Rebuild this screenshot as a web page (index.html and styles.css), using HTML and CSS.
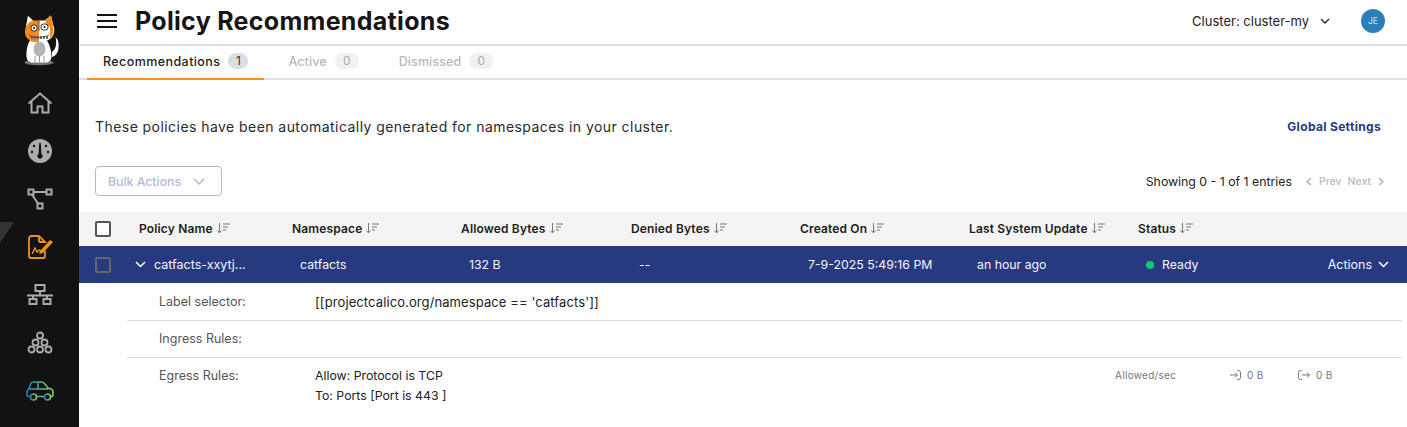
FILE: index.html
```html
<!DOCTYPE html>
<html lang="en">
<head>
    <meta charset="UTF-8">
    <meta name="viewport" content="width=device-width, initial-scale=1.0">
    <title>Policy Recommendations</title>
    <link rel="stylesheet" href="styles.css">
</head>
<body>
<div class="app">
    <nav class="sidebar">
        <svg class="logo" width="40" height="56" viewBox="0 0 40 56">
            <ellipse cx="19" cy="48.500" rx="14.500" ry="2.800" fill="#77777a"/>
            <path d="M32 38c4-3 5-8 3.500-15 3 3 3.500 6 3 11-.5 5-3 8-6.500 9z" fill="#fff"/>
            <path d="M10 26c-3 5-4 12-3.500 17 .3 3 2 5 5 5.500h15c3-.5 5-3 5-6 0-6-2-12-4.500-16z" fill="#fff"/>
            <ellipse cx="19.500" cy="35" rx="6" ry="7.500" fill="#b3b3b8"/>
            <path d="M15 42v6M19.500 42v6M24 42v6" stroke="#555" stroke-width=".6"/>
            <path d="M8 2l5 4.500h6V28c-5 1-9-.5-12-4-2.500-3-2.500-8-1-11.500z" fill="#f28a17"/>
            <path d="M19 6.500h5.500L31 1.500l2 9c2 4 1.500 8.500-.5 12-3 4-8 5.500-13.500 5.500z" fill="#fff"/>
            <path d="M25 6.500l6-5 2 9-2 3-4-2.500-1-2z" fill="#f28a17"/>
            <path d="M32 11c2 4 1.500 8.500-.5 12l-1.500 1V13z" fill="#f28a17"/>
            <path d="M8 2l5 4.500-4 2-3 4z" fill="#fff"/>
            <rect x="11" y="11" width="6" height="6" rx="2.500" fill="#fff" stroke="#222" stroke-width="1"/>
            <rect x="21" y="10" width="7" height="6" rx="2.500" fill="#fff" stroke="#222" stroke-width="1"/>
            <circle cx="14" cy="14" r="1.100" fill="#222"/>
            <circle cx="24.500" cy="13" r="1.100" fill="#222"/>
            <path d="M19 7v10M9 21c4 3 15 3 20 0" fill="none" stroke="#333" stroke-width=".8"/>
            <path d="M11 23.500h17" stroke="#555" stroke-width="2.500" stroke-dasharray="2 1"/>
        </svg>
        <a class="nav-item">
            <svg width="26" height="22" viewBox="0 0 26 22" fill="none" stroke="#aaaaaf" stroke-width="2"><path d="M1.500 11.500 13 1.500l11.500 10M4.500 9.500V20.500h6v-6h5v6h6V9.500"/></svg>
        </a>
        <a class="nav-item">
            <svg width="26" height="26" viewBox="0 0 26 26"><circle cx="13" cy="13" r="12" fill="#aaaaaf"/><path d="M12.200 5h1.600l.6 11a2.500 2.500 0 1 1-2.800 0z" fill="#111"/><g fill="#111"><circle cx="7" cy="8" r="1.200"/><circle cx="19" cy="8" r="1.200"/><circle cx="5" cy="14" r="1.200"/><circle cx="21" cy="14" r="1.200"/></g></svg>
        </a>
        <a class="nav-item">
            <svg width="26" height="22" viewBox="0 0 26 22" fill="none" stroke="#aaaaaf" stroke-width="2"><rect x="1.500" y="1.500" width="5" height="5"/><rect x="19.500" y="1.500" width="5" height="5"/><rect x="10.500" y="15.500" width="5" height="5"/><path d="M6.500 4h13M5 6.500l6 9"/></svg>
        </a>
        <a class="nav-item">
            <svg width="26" height="24" viewBox="0 0 26 24" fill="none" stroke="#f0901e" stroke-width="1.800"><path d="M12 1H4a2.500 2.500 0 0 0-2 2v18a2 2 0 0 0 2 2h12a2 2 0 0 0 2-2v-5M12 1v5a1 1 0 0 0 1 1h5L12 1z"/><path d="M5 19l3-6 2 4 2-2 2 1" stroke-width="1.400"/><path d="M13 16l10-11 3 2-10 11-4 1z" fill="#f0901e" stroke="none"/></svg>
        </a>
        <a class="nav-item">
            <svg width="26" height="22" viewBox="0 0 26 22" fill="none" stroke="#aaaaaf" stroke-width="2"><rect x="8.500" y="1" width="9" height="6"/><rect x="2.500" y="15" width="7" height="5"/><rect x="16.500" y="15" width="7" height="5"/><path d="M13 7v4M0 11.500h26M6 11.500V15M20 11.500V15"/></svg>
        </a>
        <a class="nav-item">
            <svg width="26" height="24" viewBox="0 0 26 24" fill="none" stroke="#aaaaaf" stroke-width="1.800"><circle cx="13" cy="4.500" r="3"/><circle cx="8.500" cy="11.500" r="3"/><circle cx="17.500" cy="11.500" r="3"/><circle cx="4.500" cy="18.500" r="3"/><circle cx="13" cy="18.500" r="3"/><circle cx="21.500" cy="18.500" r="3"/></svg>
        </a>
        <a class="nav-item">
            <svg width="28" height="20" viewBox="0 0 28 20" fill="none" stroke-width="1.500" stroke="url(#carfill)">
                <defs><linearGradient id="carfill" x1="0" y1="0" x2="1" y2="0"><stop offset="0" stop-color="#1c86c8"/><stop offset="1" stop-color="#8ed651"/></linearGradient></defs>
                <path d="M5 15.500H2.500C1.500 15.500 1 15 1 14v-3c0-1 .5-2 1.500-2.500L5 2.500C5.500 1.300 6.500 1 7.500 1h8c1 0 2 .5 3 1.500L22 7l3 1c1.500.5 2 1.500 2 2.500V14c0 1-.5 1.500-1.500 1.500H24M10.500 15.500h8M3 8h19M12 1v7"/>
                <circle cx="7.500" cy="16" r="3"/><circle cx="21.500" cy="16" r="3"/>
            </svg>
        </a>
        <span class="nav-notch"></span>
    </nav>

    <main class="main">
        <header class="topbar">
            <span class="menu-btn"><i></i><i></i><i></i></span>
            <h1>Policy Recommendations</h1>
            <span class="cluster">Cluster: cluster-my
                <svg width="10" height="6" viewBox="0 0 10 6" fill="none" stroke="#222" stroke-width="1.300"><path d="M1 1l4 4 4-4"/></svg>
            </span>
            <span class="avatar">JE</span>
        </header>

        <div class="tabs">
            <a class="tab tab-active">Recommendations <span class="count">1</span></a>
            <a class="tab">Active <span class="count">0</span></a>
            <a class="tab">Dismissed <span class="count">0</span></a>
        </div>

        <div class="intro">
            <p>These policies have been automatically generated for namespaces in your cluster.</p>
            <a class="global-link">Global Settings</a>
        </div>

        <div class="toolbar">
            <button class="bulk-btn">Bulk Actions
                <svg width="12" height="7" viewBox="0 0 12 7" fill="none" stroke="#b4b9d8" stroke-width="1.500"><path d="M1 1l5 5 5-5"/></svg>
            </button>
            <div class="pager">
                <span class="pager-info">Showing 0 - 1 of 1 entries</span>
                <span class="pager-link"><svg width="6" height="9" viewBox="0 0 6 9" fill="none" stroke="#aaa" stroke-width="1.200"><path d="M5 1L1 4.500 5 8"/></svg> Prev</span>
                <span class="pager-link">Next <svg width="6" height="9" viewBox="0 0 6 9" fill="none" stroke="#aaa" stroke-width="1.200"><path d="M1 1l4 3.500L1 8"/></svg></span>
            </div>
        </div>

        <div class="tbl-row tbl-head">
            <span class="cell-check"><span class="checkbox"></span></span>
            <span class="th">Policy Name <svg class="sort" width="13" height="11" viewBox="0 0 13 11"><use href="#sorticon"/></svg></span>
            <span class="th">Namespace <svg class="sort" width="13" height="11" viewBox="0 0 13 11"><use href="#sorticon"/></svg></span>
            <span class="th">Allowed Bytes <svg class="sort" width="13" height="11" viewBox="0 0 13 11"><use href="#sorticon"/></svg></span>
            <span class="th">Denied Bytes <svg class="sort" width="13" height="11" viewBox="0 0 13 11"><use href="#sorticon"/></svg></span>
            <span class="th">Created On <svg class="sort" width="13" height="11" viewBox="0 0 13 11"><use href="#sorticon"/></svg></span>
            <span class="th">Last System Update <svg class="sort" width="13" height="11" viewBox="0 0 13 11"><use href="#sorticon"/></svg></span>
            <span class="th">Status <svg class="sort" width="13" height="11" viewBox="0 0 13 11"><use href="#sorticon"/></svg></span>
        </div>

        <div class="tbl-row tbl-selected">
            <span class="cell-check"><span class="checkbox checkbox-dim"></span></span>
            <span class="td td-name">
                <svg width="11" height="7" viewBox="0 0 11 7" fill="none" stroke="#fff" stroke-width="1.500"><path d="M1 1l4.500 4.500L10 1"/></svg>
                catfacts-xxytj...
            </span>
            <span class="td">catfacts</span>
            <span class="td">132 B</span>
            <span class="td">--</span>
            <span class="td">7-9-2025 5:49:16 PM</span>
            <span class="td">an hour ago</span>
            <span class="td td-status"><i class="dot"></i>Ready</span>
            <span class="td-actions">Actions
                <svg width="11" height="7" viewBox="0 0 11 7" fill="none" stroke="#fff" stroke-width="1.500"><path d="M1 1l4.500 4.500L10 1"/></svg>
            </span>
        </div>

        <div class="detail">
            <div class="detail-row">
                <span class="detail-label">Label selector:</span>
                <span class="detail-value selector">[[projectcalico.org/namespace == 'catfacts']]</span>
            </div>
            <div class="detail-row">
                <span class="detail-label">Ingress Rules:</span>
                <span class="detail-value"></span>
            </div>
            <div class="detail-row detail-last">
                <span class="detail-label">Egress Rules:</span>
                <span class="detail-value rule-lines">Allow: Protocol is TCP<br>To: Ports [Port is 443 ]</span>
                <span class="stats">
                    <span class="stat-name">Allowed/sec</span>
                    <span class="stat">
                        <svg width="11" height="10" viewBox="0 0 11 10" fill="none" stroke="#777" stroke-width="1"><path d="M0 5h7M5 2.500 7.500 5 5 7.500M7 .5h1.500a2 2 0 0 1 2 2v5a2 2 0 0 1-2 2H7"/></svg>
                        0 B
                    </span>
                    <span class="stat">
                        <svg width="12" height="10" viewBox="0 0 12 10" fill="none" stroke="#777" stroke-width="1"><path d="M4 .5H2.500a2 2 0 0 0-2 2v5a2 2 0 0 0 2 2H4M4 5h7.500M9 2.500 11.500 5 9 7.500"/></svg>
                        0 B
                    </span>
                </span>
            </div>
        </div>
    </main>
</div>

<svg class="defs" width="0" height="0">
    <symbol id="sorticon" viewBox="0 0 13 11">
        <path d="M2.500 0v9M.5 7.500l2 2.500 2-2.500M6 1h7M6 4h5M6 7h3" fill="none" stroke="#777" stroke-width="1"/>
    </symbol>
</svg>
</body>
</html>
```

FILE: styles.css
```css
* { box-sizing: border-box; }
html, body { margin: 0; height: 100%; overflow: hidden; }
body { font-family: Inter, "Liberation Sans", sans-serif; font-size: 13px; color: #222; background: #fff; }
h1, p { margin: 0; }

.app { display: flex; height: 427px; }
.defs { position: absolute; }

/* sidebar */
.sidebar { position: relative; width: 79px; flex: none; background: #121212; display: flex; flex-direction: column; align-items: center; padding-top: 14px; }
.logo { margin-bottom: 9px; }
.nav-item { height: 48px; display: flex; align-items: center; justify-content: center; }
.nav-notch { position: absolute; left: 0; top: 222px; width: 14px; height: 21px; background: #333336; clip-path: polygon(0 0, 100% 0, 0 100%); }

/* top */
.main { flex: 1; min-width: 0; }
.topbar { height: 46px; border-bottom: 2px solid #dedee3; display: flex; align-items: center; padding: 0 22px 2px 18px; }
.menu-btn { width: 20px; display: flex; flex-direction: column; gap: 4px; margin-right: 18px; }
.menu-btn i { display: block; height: 2px; background: #111; }
.topbar h1 { font-size: 25px; font-weight: 700; color: #151515; flex: 1; letter-spacing: .3px; }
.cluster { display: flex; align-items: center; gap: 11px; font-size: 13px; color: #222; margin-right: 31px; margin-left: -1px; }
.avatar { width: 24px; height: 24px; border-radius: 50%; background: #2b7fb8; color: #cfe3f2; font-size: 8.500px; display: flex; align-items: center; justify-content: center; }

.tabs { height: 34px; border-bottom: 2px solid #dedee3; display: flex; padding-left: 8px; }
.tab { display: flex; align-items: center; gap: 8px; padding: 0 16px 2px; height: 34px; color: #b8b8be; font-size: 12.500px; font-weight: 500; margin-right: 8px; letter-spacing: .1px; border-bottom: 2px solid transparent; }
.tab-active { color: #1c1c1c; border-bottom-color: #f0901e; letter-spacing: .42px; }
.count { display: inline-block; min-width: 24px; height: 16px; line-height: 16px; text-align: center; border-radius: 8px; background: #f1f1f3; font-weight: 400; font-size: 12px; color: #aaa; letter-spacing: 0; }
.tab-active .count { background: #dcdde2; color: #333; min-width: 20px; }

.intro { display: flex; justify-content: space-between; align-items: center; padding: 0 26px 0 16px; margin-top: 36px; height: 20px; }
.intro p { font-size: 14px; color: #2a2a2a; letter-spacing: .44px; }
.global-link { font-size: 12px; font-weight: 700; color: #27397f; letter-spacing: .33px; }

.toolbar { display: flex; justify-content: space-between; align-items: center; padding: 0 23px 0 16px; margin-top: 30px; height: 30px; }
.bulk-btn { width: 127px; height: 30px; border: 1px solid #b4b9d8; border-radius: 4px; background: #fff; color: #b4b9d8; font: 500 12.300px Inter, sans-serif; display: flex; align-items: center; justify-content: center; gap: 12px; padding: 0 4px 0 0; }
.pager { display: flex; align-items: center; gap: 6px; }
.pager-info { font-size: 12.300px; color: #222; margin-right: 8px; }
.pager-link { font-size: 10.500px; font-weight: 500; color: #bbb; display: flex; align-items: center; gap: 7px; }

/* table */
.tbl-row { position: relative; display: grid; grid-template-columns: 60px 153px 169px 170px 169px 169px 169px 1fr; align-items: center; }
.tbl-head { margin-top: 16px; height: 34px; background: #f4f4f4; }
.tbl-selected { height: 37px; background: #27397f; color: #fff; }
.cell-check { padding-left: 16px; display: flex; }
.checkbox { width: 16px; height: 16px; border: 2px solid #555; border-radius: 2px; background: #fff; }
.checkbox-dim { background: transparent; border-color: #666; }
.th { font-size: 12px; font-weight: 600; color: #1c1c1c; display: flex; align-items: center; gap: 4px; letter-spacing: .15px; padding-bottom: 2px; }
.td { padding-left: 8px; font-size: 12.300px; color: #f4f5fa; }
.td-name { display: flex; align-items: center; gap: 8px; margin-left: -4px; padding: 0; font-size: 12.500px; }
.td-status { display: flex; align-items: center; gap: 8px; }
.dot { width: 8px; height: 8px; border-radius: 50%; background: #0ccb6b; }
.td-actions { position: absolute; right: 18px; top: 0; height: 37px; display: flex; align-items: center; gap: 6px; font-size: 12.500px; color: #f4f5fa; }

.detail { padding: 1px 5px 0 48px; }
.detail-row { display: flex; min-height: 37px; align-items: center; border-bottom: 1px solid #dcdcdc; font-size: 12.500px; padding-bottom: 1px; }
.detail-last { border-bottom: 0; align-items: flex-start; padding-top: 9px; }
.detail-last .detail-label { margin-top: 1px; }
.detail-label { width: 188px; padding-left: 32px; flex: none; color: #555; }
.detail-value { color: #222; flex: 1; }
.selector { font-size: 13px; letter-spacing: .1px; }
.rule-lines { line-height: 20px; margin-top: -1px; font-size: 12.300px; }
.stats { display: flex; align-items: center; font-size: 10px; color: #777; padding-right: 36px; height: 18px; letter-spacing: .3px; margin-top: -1px; }
.stat-name { width: 115px; }
.stat { width: 68px; display: flex; align-items: center; gap: 6px; }
```
